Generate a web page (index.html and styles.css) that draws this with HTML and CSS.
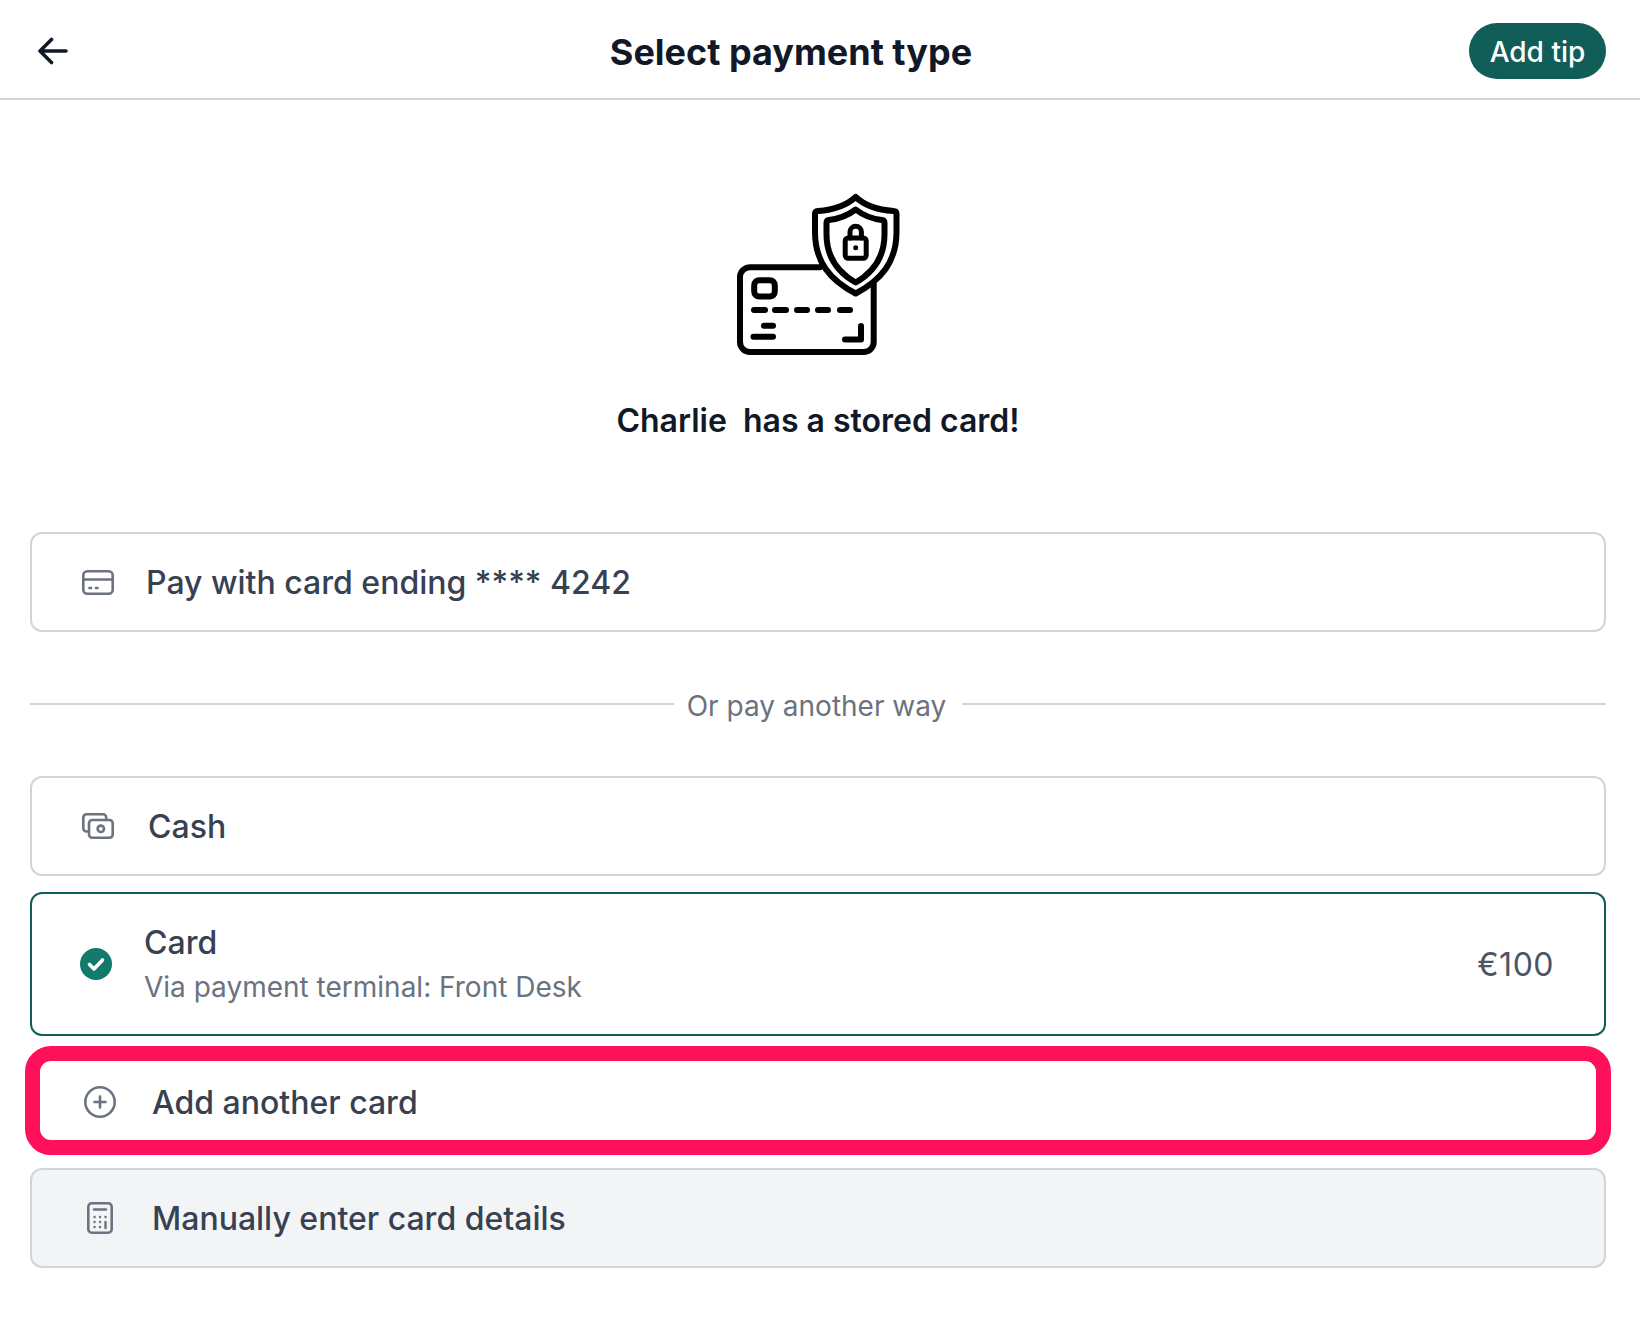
FILE: index.html
```html
<!DOCTYPE html>
<html lang="en">
<head>
<meta charset="utf-8">
<title>Select payment type</title>
<link rel="stylesheet" href="styles.css">
</head>
<body>
<header class="topbar">
  <button class="back" aria-label="Back">
    <svg width="32" height="28" viewBox="0 0 32 28" fill="none" stroke="#111827" stroke-width="3.6" stroke-linecap="round" stroke-linejoin="round"><path d="M3 14H29M14.500 2.500 3 14l11.500 11.500"/></svg>
  </button>
  <h1 class="title">Select payment type</h1>
  <button class="tip">Add tip</button>
</header>
<main class="content">
  <section class="hero">
    <svg class="hero-icon" width="200" height="190" viewBox="0 0 200 190" fill="none" stroke="#000" stroke-width="6" stroke-linecap="round" stroke-linejoin="round">
      <path d="M120 97.300H50a10 10 0 0 0-10 10V172a10 10 0 0 0 10 10H163.700a10 10 0 0 0 10-10V114"/>
      <rect x="54.200" y="110.200" width="20.600" height="16.300" rx="5"/>
      <path d="M54 140H65M75 140H86M97 140H107M118 140H128M140 140H150M64 155.700H73M53.500 166.700H73M145 169.500H161V156"/>
      <path d="M155.700 27C146 36 132 40 118 41q-3 .2-3 3V62C115 92 130 110 155.700 123.500 181 110 196.500 92 196.500 62V44q0-3-3-3C179 40 165 36 155.700 27Z"/>
      <path d="M155.700 39.500C147 46 138 49 129 50q-2.500.3-2.500 3V64C126.500 86 137 102 155.700 112.500 174 102 184.500 86 184.500 64V53q0-2.700-2.500-3C173 49 164 46 155.700 39.500Z"/>
      <rect class="lock" x="145.200" y="68" width="21" height="20.300" rx="3"/>
      <path class="lock" d="M150 68V62a5.700 5.700 0 0 1 11.400 0V68"/>
      <circle class="lock-dot" cx="155.700" cy="77.700" r="2.500"/>
    </svg>
    <h2 class="hero-text">Charlie&nbsp; has a stored card!</h2>
  </section>

  <button class="row row-stored">
    <svg class="ico" width="32" height="25" viewBox="0 0 32 25" fill="none" stroke="#6b7280" stroke-width="2.600" stroke-linecap="round" stroke-linejoin="round"><rect x="1.300" y="1.300" width="29.400" height="22.400" rx="4"/><path d="M1.300 9.500H30.700M7.500 18H9M14 18H15.500"/></svg>
    <span class="label">Pay with card ending **** 4242</span>
  </button>

  <div class="divider"><span>Or pay another way</span></div>

  <button class="row row-cash">
    <svg class="ico" width="32" height="26" viewBox="0 0 32 26" fill="none" stroke="#6b7280" stroke-width="2.600" stroke-linecap="round" stroke-linejoin="round"><path d="M5 18.500H4.500a3.200 3.200 0 0 1-3.200-3.200V4.500a3.200 3.200 0 0 1 3.200-3.200H21a3.200 3.200 0 0 1 3.200 3.200V7"/><rect x="7" y="7" width="23.700" height="17.700" rx="3.200"/><circle cx="18.800" cy="15.800" r="3.200"/></svg>
    <span class="label">Cash</span>
  </button>

  <button class="row row-card">
    <svg class="ico" width="32" height="32" viewBox="0 0 32 32"><circle cx="16" cy="16" r="16" fill="#117a6b"/><path d="M9.500 16.500l4.500 4.500 8.500-9" fill="none" stroke="#fff" stroke-width="3.600" stroke-linecap="round" stroke-linejoin="round"/></svg>
    <span class="stack">
      <span class="label">Card</span>
      <span class="sub">Via payment terminal: Front Desk</span>
    </span>
    <span class="amount">€100</span>
  </button>

  <div class="row-wrap">
    <button class="row row-add">
      <svg class="ico" width="32" height="32" viewBox="0 0 32 32" fill="none" stroke="#6b7280" stroke-width="2.600" stroke-linecap="round"><circle cx="16" cy="16" r="14.700"/><path d="M16 10.500V21.500M10.500 16H21.500"/></svg>
      <span class="label">Add another card</span>
    </button>
    <div class="highlight"></div>
  </div>

  <button class="row row-manual">
    <svg class="ico" width="26" height="32" viewBox="0 0 26 32" fill="none" stroke="#6b7280" stroke-width="2.600" stroke-linecap="round"><rect x="1.300" y="1.300" width="23.400" height="29.400" rx="3.500"/><path d="M7 7.500H19" stroke-width="2.400"/><path d="M7.500 15H7.600M13 15H13.100M18.500 15H18.600M7.500 20H7.600M13 20H13.100M18.500 20V26M7.500 25H7.600M13 25H13.100" stroke-width="2.400"/></svg>
    <span class="label">Manually enter card details</span>
  </button>
</main>
</body>
</html>
```
FILE: styles.css
```css
* { box-sizing: border-box; }
html, body { margin: 0; padding: 0; background: #fff; }
body { font-family: Inter, "Liberation Sans", sans-serif; color: #111827; }
button { font: inherit; margin: 0; cursor: pointer; }

.topbar {
  display: flex;
  align-items: center;
  justify-content: space-between;
  height: 100px;
  padding: 4px 34px 0 37px;
  border-bottom: 2px solid #d1d5db;
}
.back { display: flex; width: 76px; padding: 0; border: 0; background: none; }
.title { margin: 2px 0 0 0; font-size: 36px; font-weight: 700; color: #111827; }
.tip {
  height: 56px;
  width: 137px;
  padding: 2px 0 0;
  border: 0;
  border-radius: 28px;
  background: #115e59;
  color: #fff;
  font-size: 28px;
  font-weight: 500;
}

.content {
  display: flex;
  flex-direction: column;
  padding: 0 34px 0 30px;
}
.hero { display: flex; flex-direction: column; align-items: center; }
.hero-icon { display: block; margin: 70px 0 0 -37px; }
.hero-icon .lock { stroke-width: 5; }
.hero-icon .lock-dot { fill: #000; stroke: none; }
.hero-text { margin: 41px 0 0; font-size: 32px; font-weight: 600; color: #111827; line-height: 40px; }

.row {
  display: flex;
  align-items: center;
  width: 100%;
  min-height: 100px;
  padding: 0 50px;
  border: 2px solid #d1d5db;
  border-radius: 12px;
  background: #fff;
  text-align: left;
}
.ico { flex: none; display: block; }
.label { padding-top: 2px; font-size: 32px; font-weight: 500; color: #374151; line-height: 44px; }

.row-stored { margin-top: 91px; }
.row-stored .label { margin-left: 32px; }

.divider {
  display: flex;
  align-items: center;
  gap: 13px;
  margin: 52px 0;
  color: #6b7280;
  font-size: 28px;
  line-height: 36px;
}
.divider span { padding: 4px 3px 0 0; }
.divider::before, .divider::after {
  content: "";
  flex: 1;
  height: 2px;
  background: #d1d5db;
}

.row-cash .label { margin-left: 34px; }

.row-card {
  min-height: 144px;
  margin-top: 16px;
  padding-left: 48px;
  border-color: #115e59;
}
.stack { display: flex; flex-direction: column; margin: 2px 0 0 32px; }
.stack .label { padding-top: 0; }
.sub { font-size: 28px; color: #6b7280; line-height: 44px; }
.amount { margin-left: auto; font-size: 32px; letter-spacing: 0.5px; color: #4b5563; }

.row-wrap { position: relative; margin-top: 16px; }
.row-add .label { margin-left: 36px; }
.row-add { padding-left: 52px; }
.highlight {
  position: absolute;
  inset: -6px -5px -3px -5px;
  border: 15px solid #ff105a;
  border-radius: 26px;
}

.row-manual {
  margin-top: 16px;
  padding-left: 55px;
  background: #f3f4f6;
}
.row-manual .label { margin-left: 39px; }
```
